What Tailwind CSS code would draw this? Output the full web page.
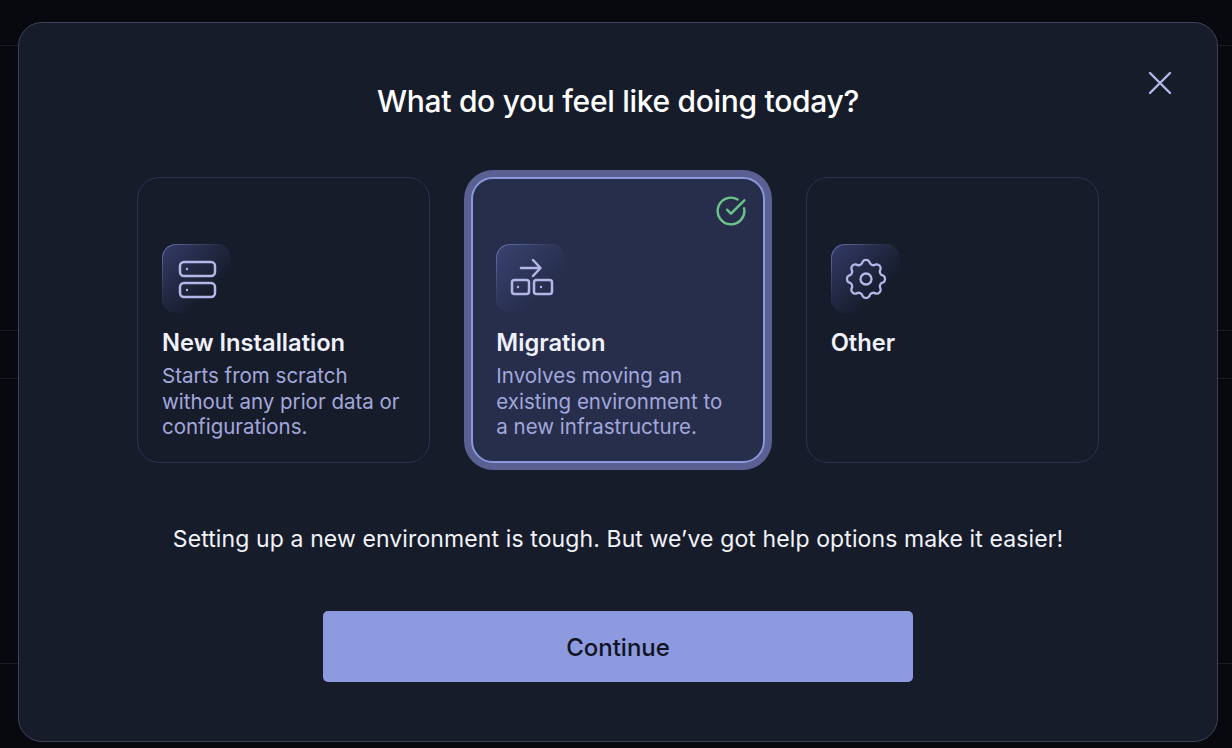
<!DOCTYPE html>
<html lang="en">
<head>
    <title>What do you feel like doing today?</title>
    <meta name="viewport" content="width=device-width, initial-scale=1.0">
    <script src="https://cdn.jsdelivr.net/npm/@tailwindcss/browser@4"></script>
</head>
<body class="bg-[#07090f] font-['Inter',sans-serif] h-[748px] overflow-hidden relative">
    <!-- Page behind the modal -->
    <div class="absolute inset-0 flex flex-col">
        <div class="h-[46px] border-b border-[#1a1d28]"></div>
        <div class="h-[285px] border-b border-[#1a1d28]"></div>
        <div class="h-[48px] border-b border-[#1a1d28]"></div>
        <div class="h-[285px] border-b border-[#1a1d28]"></div>
    </div>

    <div class="relative pt-[22px] pl-[18px]">
        <!-- Modal -->
        <div class="relative w-[1200px] h-[720px] bg-[#171c2b] border border-[#3d4259] rounded-[24px] pt-[59px] flex flex-col items-center">
            <button class="absolute left-[1129px] top-[48px] w-6 h-6">
                <svg viewBox="0 0 24 24" class="w-6 h-6" fill="none" stroke="#b3b8e8" stroke-width="2.400" stroke-linecap="round"><path d="M2 2l20 20M22 2L2 22"/></svg>
            </button>

            <h1 class="text-[30px] leading-[38px] font-[550] tracking-[-0.3px] text-white">What do you feel like doing today?</h1>

            <div class="grid grid-cols-3 gap-[41px] w-[962px] mt-[57px]">
                <!-- New Installation -->
                <div class="h-[286px] rounded-[22px] border border-[#2c3152] pt-[66px] px-[24px]">
                    <div class="w-[70px] h-[70px] rounded-[14px] p-px bg-linear-to-br from-[#6d76b5] via-[#171c2b] to-[#171c2b]">
                        <div class="w-full h-full rounded-[13px] bg-linear-to-br from-[#333b68] to-[#171c2b] to-70%">
                            <svg viewBox="0 0 68 68" class="w-[68px] h-[68px]" fill="none" stroke="#b3b8e8" stroke-width="2.500">
                                <rect x="17" y="17" width="35" height="14" rx="4"/>
                                <rect x="17" y="38" width="35" height="14" rx="4"/>
                                <circle cx="24" cy="24" r="1.200" fill="#b3b8e8" stroke="none"/>
                                <circle cx="24" cy="45" r="1.200" fill="#b3b8e8" stroke="none"/>
                            </svg>
                        </div>
                    </div>
                    <h2 class="mt-[14px] text-[23.700px] leading-[30px] font-semibold text-[#f0f1fb]">New Installation</h2>
                    <p class="mt-[5px] max-w-[240px] text-[20.500px] leading-[25.600px] text-[#a3a8dc]">Starts from scratch without any prior data or configurations.</p>
                </div>

                <!-- Migration (selected) -->
                <div class="relative h-[286px] rounded-[22px] bg-[#262e4c] border-2 border-[#8b96dc] ring-[7px] ring-[#5a6092] pt-[65px] px-[23px]">
                    <svg viewBox="0 0 24 24" class="absolute right-[16px] top-[16px] w-[32px] h-[32px]" fill="none" stroke="#6cc38a" stroke-width="1.800" stroke-linecap="round" stroke-linejoin="round"><path d="M21.801 10A10 10 0 1 1 17 3.335"/><path d="m9 11 3 3L22 4"/></svg>
                    <div class="w-[70px] h-[70px] rounded-[14px] p-px bg-linear-to-br from-[#6d76b5] via-[#262e4c] to-[#262e4c]">
                        <div class="w-full h-full rounded-[13px] bg-linear-to-br from-[#39426f] to-[#262e4c] to-70%">
                            <svg viewBox="0 0 68 68" class="w-[68px] h-[68px]" fill="none" stroke="#b3b8e8" stroke-width="2.500" stroke-linecap="round" stroke-linejoin="round">
                                <path d="M24 23h19M36 15l7.500 8-7.500 8"/>
                                <rect x="15" y="35" width="17" height="14" rx="2.500"/>
                                <rect x="37" y="35" width="18" height="14" rx="2.500"/>
                                <circle cx="21" cy="42" r="1.200" fill="#b3b8e8" stroke="none"/>
                                <circle cx="44" cy="42" r="1.200" fill="#b3b8e8" stroke="none"/>
                            </svg>
                        </div>
                    </div>
                    <h2 class="mt-[14px] text-[23.700px] leading-[30px] font-semibold text-[#f0f1fb]">Migration</h2>
                    <p class="mt-[5px] max-w-[240px] text-[20.500px] leading-[25.600px] text-[#a3a8dc]">Involves moving an existing environment to a new infrastructure.</p>
                </div>

                <!-- Other -->
                <div class="h-[286px] rounded-[22px] border border-[#2c3152] pt-[66px] px-[24px]">
                    <div class="w-[70px] h-[70px] rounded-[14px] p-px bg-linear-to-br from-[#6d76b5] via-[#171c2b] to-[#171c2b]">
                        <div class="w-full h-full rounded-[13px] bg-linear-to-br from-[#333b68] to-[#171c2b] to-70%">
                            <svg viewBox="-34 -34 68 68" class="w-[68px] h-[68px]" fill="none" stroke="#b3b8e8" stroke-width="2.300">
                                <path d="M-3.41-17.16A4 4 0 0 1 3.41-17.16A4 4 0 0 0 9.72-14.55A4 4 0 0 1 14.55-9.72A4 4 0 0 0 17.16-3.41A4 4 0 0 1 17.16 3.41A4 4 0 0 0 14.55 9.72A4 4 0 0 1 9.72 14.55A4 4 0 0 0 3.41 17.16A4 4 0 0 1-3.41 17.16A4 4 0 0 0-9.72 14.55A4 4 0 0 1-14.55 9.72A4 4 0 0 0-17.16 3.41A4 4 0 0 1-17.16-3.41A4 4 0 0 0-14.55-9.72A4 4 0 0 1-9.72-14.55A4 4 0 0 0-3.41-17.16Z"/>
                                <circle cx="0" cy="0" r="5.500"/>
                            </svg>
                        </div>
                    </div>
                    <h2 class="mt-[14px] text-[23.700px] leading-[30px] font-semibold text-[#f0f1fb]">Other</h2>
                </div>
            </div>

            <p class="mt-[61px] text-[23px] leading-[30px] tracking-[0.11px] text-[#f2f3f8]">Setting up a new environment is tough. But we’ve got help options make it easier!</p>

            <button class="mt-[57px] w-[590px] h-[71px] pt-[3px] rounded-[5px] bg-[#8e9ae0] text-[#111522] text-[24px] font-medium">Continue</button>
        </div>
    </div>
</body>
</html>
